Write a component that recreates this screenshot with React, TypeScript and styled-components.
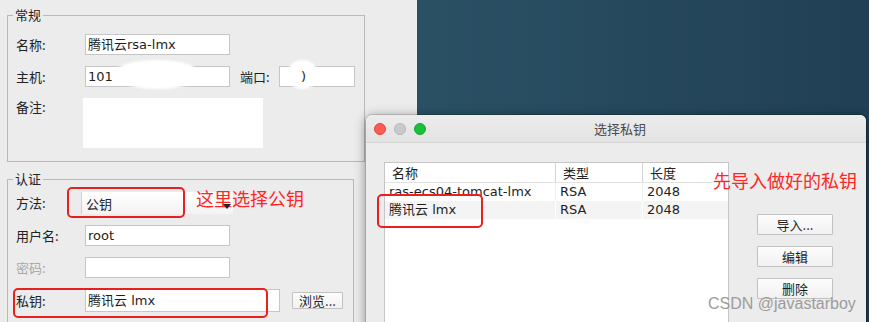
import styled, { createGlobalStyle } from "styled-components";

const ui = `"DejaVu Sans", "Noto Sans CJK SC", sans-serif`;
const cjk = `"Noto Sans CJK SC", "Noto Sans", sans-serif`;

const GlobalStyle = createGlobalStyle`
  html, body { margin: 0; padding: 0; background: #ececec; }
  * { box-sizing: border-box; }
`;

const Desktop = styled.div`
  position: relative;
  width: 869px;
  height: 322px;
  overflow: hidden;
  display: flex;
  background: linear-gradient(90deg, #2f5a6e 0%, #2b5266 45%, #213f55 100%);
  font-family: ${ui};
  font-size: 13px;
  color: #222;
`;

const LeftWindow = styled.div`
  width: 417px;
  height: 322px;
  flex-shrink: 0;
  background: #ececec;
  padding: 6px 0 0 7px;
  display: flex;
  flex-direction: column;
`;

const Group = styled.fieldset<{ $w: number; $top?: number; $pt: number }>`
  margin: ${p => p.$top || 0}px 0 0 0;
  width: ${p => p.$w}px;
  border: 1px solid #b9b9b9;
  padding: ${p => p.$pt}px 8px 13px 8px;
  min-width: 0;
`;

const Legend = styled.legend`
  margin-left: -3px;
  padding: 0 2px;
  font-family: ${cjk};
  font-size: 13px;
  line-height: 18px;
  color: #222;
`;

const Fields = styled.div`
  display: flex;
  flex-direction: column;
  gap: 11px;
`;

const Row = styled.div<{ $top?: boolean }>`
  display: flex;
  align-items: ${p => (p.$top ? "flex-start" : "center")};
`;

const Label = styled.span<{ $off?: boolean; $w?: number }>`
  width: ${p => p.$w || 69}px;
  flex-shrink: 0;
  font-family: ${cjk};
  font-size: 13px;
  line-height: 18px;
  color: ${p => (p.$off ? "#a9a9a9" : "#222")};
`;

const Input = styled.div<{ $w: number; $h?: number }>`
  position: relative;
  width: ${p => p.$w}px;
  height: ${p => p.$h || 21}px;
  background: #fff;
  border: 1px solid #c6c6c6;
  padding-left: 2px;
  font-family: ${ui};
  font-size: 13px;
  line-height: ${p => (p.$h || 21) - 2}px;
  color: #1e1e1e;
  white-space: nowrap;
`;

const Smudge = styled.span<{ $l: number; $w: number }>`
  position: absolute;
  left: ${p => p.$l}px;
  top: -7px;
  width: ${p => p.$w}px;
  height: 29px;
  border-radius: 50%;
  background: #fff;
  filter: blur(1.2px);
`;

const Peek = styled.span`
  position: relative;
  padding-left: 19px;
`;

const Note = styled.div`
  width: 180px;
  height: 50px;
  margin-left: -2px;
  background: #fff;
`;

const Combo = styled.div`
  width: 152px;
  height: 22px;
  margin-left: -4px;
  padding: 0 2px 0 4px;
  display: flex;
  align-items: center;
  justify-content: space-between;
  background: linear-gradient(180deg, #ffffff 0%, #f3f3f3 100%);
  border-left: 1px solid #d2d2d2;
  font-family: ${cjk};
  font-size: 13px;
`;

const Arrow = styled.svg`
  position: relative;
  z-index: 2;
  margin-top: 7px;
`;

const Gap = styled.span<{ $w: number }>`
  width: ${p => p.$w}px;
  flex-shrink: 0;
`;

const SmallButton = styled.button<{ $w: number; $h: number }>`
  width: ${p => p.$w}px;
  height: ${p => p.$h}px;
  padding: 0;
  border: 1px solid #c2c2c2;
  border-radius: 1px;
  background: linear-gradient(180deg, #fdfdfd 0%, #f1f1f1 100%);
  font-family: ${cjk};
  font-size: 13px;
  line-height: ${p => p.$h - 2}px;
  color: #1e1e1e;
`;

const Dialog = styled.div`
  position: absolute;
  left: 366px;
  top: 115px;
  width: 500px;
  height: 250px;
  background: #ececec;
  border-radius: 6px 6px 0 0;
  box-shadow: 0 0 0 1px rgba(0, 0, 0, 0.12), 0 2px 12px rgba(0, 0, 0, 0.45);
  display: flex;
  flex-direction: column;
  overflow: hidden;
`;

const TitleBar = styled.div`
  height: 28px;
  flex-shrink: 0;
  display: grid;
  grid-template-columns: 1fr auto 1fr;
  align-items: center;
  background: linear-gradient(180deg, #ececec 0%, #e3e3e3 100%);
  border-bottom: 1px solid #d6d6d6;
  padding-left: 8px;
`;

const Lights = styled.div`
  display: flex;
  gap: 8px;
`;

const Light = styled.span<{ $c: string; $b: string }>`
  width: 12px;
  height: 12px;
  border-radius: 50%;
  background: ${p => p.$c};
  border: 0.5px solid ${p => p.$b};
`;

const Title = styled.span`
  font-family: ${cjk};
  font-size: 13px;
  color: #4b4b4b;
`;

const DialogBody = styled.div`
  flex: 1;
  display: flex;
  padding: 19px 0 0 18px;
`;

const Table = styled.div`
  width: 345px;
  height: 200px;
  background: #fff;
  border: 1px solid #c6c6c6;
  border-bottom: none;
`;

const Head = styled.div`
  display: grid;
  grid-template-columns: 171px 87px 1fr;
  height: 20px;
  border-bottom: 1px solid #e2e2e2;
`;

const HeadCell = styled.div`
  padding-left: 7px;
  font-family: ${cjk};
  font-size: 13px;
  line-height: 19px;
  color: #222;
  border-right: 1px solid #d4d4d4;
  &:last-child { border-right: none; }
`;

const BodyRow = styled.div<{ $alt: boolean }>`
  display: grid;
  grid-template-columns: 171px 87px 1fr;
  height: 18px;
  background: ${p => (p.$alt ? "#f4f4f4" : "#fff")};
`;

const Cell = styled.div<{ $alt: boolean }>`
  padding-left: 4px;
  font-family: ${ui};
  font-size: 13px;
  line-height: 18px;
  color: #1e1e1e;
  white-space: nowrap;
  border-right: 1px solid ${p => (p.$alt ? "#ffffff" : "#efefef")};
  &:last-child { border-right: none; }
`;

const Side = styled.div`
  margin-left: 28px;
  padding-top: 52px;
  display: flex;
  flex-direction: column;
  gap: 11px;
`;

const Mark = styled.div<{ $x: number; $y: number; $w: number; $h: number }>`
  position: absolute;
  left: ${p => p.$x}px;
  top: ${p => p.$y}px;
  width: ${p => p.$w}px;
  height: ${p => p.$h}px;
  border: 2px solid #e8211f;
  border-radius: 5px;
`;

const Callout = styled.div<{ $x: number; $y: number }>`
  position: absolute;
  left: ${p => p.$x}px;
  top: ${p => p.$y}px;
  font-family: ${cjk};
  font-size: 18px;
  line-height: 20px;
  color: #ff2626;
  white-space: nowrap;
`;

const Watermark = styled.div`
  position: absolute;
  left: 708px;
  top: 294px;
  font-family: "Liberation Sans", Arial, sans-serif;
  font-size: 16px;
  line-height: 19px;
  color: #9c9c9c;
  white-space: nowrap;
`;

const keys = [
  { name: "ras-ecs04-tomcat-lmx", type: "RSA", size: 2048 },
  { name: "腾讯云 lmx", type: "RSA", size: 2048 },
];

export default function App() {
  return (
    <>
      <GlobalStyle />
      <Desktop>
        <LeftWindow>
          <Group $w={358} $pt={10}>
            <Legend>常规</Legend>
            <Fields>
              <Row>
                <Label>名称:</Label>
                <Input $w={145}>腾讯云rsa-lmx</Input>
              </Row>
              <Row>
                <Label>主机:</Label>
                <Input $w={145}>
                  101
                  <Smudge $l={27} $w={88} />
                </Input>
                <Gap $w={10} />
                <Label $w={39}>端口:</Label>
                <Input $w={76}>
                  <Smudge $l={7} $w={31} />
                  <Peek>)</Peek>
                </Input>
              </Row>
              <Row $top>
                <Label>备注:</Label>
                <Note />
              </Row>
            </Fields>
          </Group>
          <Group $w={347} $top={8} $pt={4}>
            <Legend>认证</Legend>
            <Fields>
              <Row>
                <Label>方法:</Label>
                <Combo>
                  公钥
                  <Arrow width="8" height="5" viewBox="0 0 8 5">
                    <path d="M0 0 H8 L4 5 Z" fill="#222" />
                  </Arrow>
                </Combo>
              </Row>
              <Row>
                <Label>用户名:</Label>
                <Input $w={145}>root</Input>
              </Row>
              <Row>
                <Label $off>密码:</Label>
                <Input $w={145} />
              </Row>
              <Row>
                <Label>私钥:</Label>
                <Input $w={195} $h={23}>腾讯云 lmx</Input>
                <Gap $w={12} />
                <SmallButton $w={51} $h={17}>浏览...</SmallButton>
              </Row>
            </Fields>
          </Group>
        </LeftWindow>

        <Dialog>
          <TitleBar>
            <Lights>
              <Light $c="#fe5b55" $b="#e0443e" />
              <Light $c="#c9c9c9" $b="#b5b5b5" />
              <Light $c="#19c13b" $b="#12a82f" />
            </Lights>
            <Title>选择私钥</Title>
            <span />
          </TitleBar>
          <DialogBody>
            <Table>
              <Head>
                <HeadCell>名称</HeadCell>
                <HeadCell>类型</HeadCell>
                <HeadCell>长度</HeadCell>
              </Head>
              {keys.map((k, i) => (
                <BodyRow key={k.name} $alt={i % 2 === 1}>
                  <Cell $alt={i % 2 === 1}>{k.name}</Cell>
                  <Cell $alt={i % 2 === 1}>{k.type}</Cell>
                  <Cell $alt={i % 2 === 1}>{k.size}</Cell>
                </BodyRow>
              ))}
            </Table>
            <Side>
              <SmallButton $w={76} $h={21}>导入...</SmallButton>
              <SmallButton $w={76} $h={21}>编辑</SmallButton>
              <SmallButton $w={76} $h={21}>删除</SmallButton>
            </Side>
          </DialogBody>
        </Dialog>

        <Mark $x={67} $y={187} $w={118} $h={31} />
        <Mark $x={13} $y={288} $w={255} $h={30} />
        <Mark $x={377} $y={194} $w={106} $h={34} />
        <Callout $x={196} $y={188}>这里选择公钥</Callout>
        <Callout $x={713} $y={170}>先导入做好的私钥</Callout>
        <Watermark>CSDN @javastarboy</Watermark>
      </Desktop>
    </>
  );
}
